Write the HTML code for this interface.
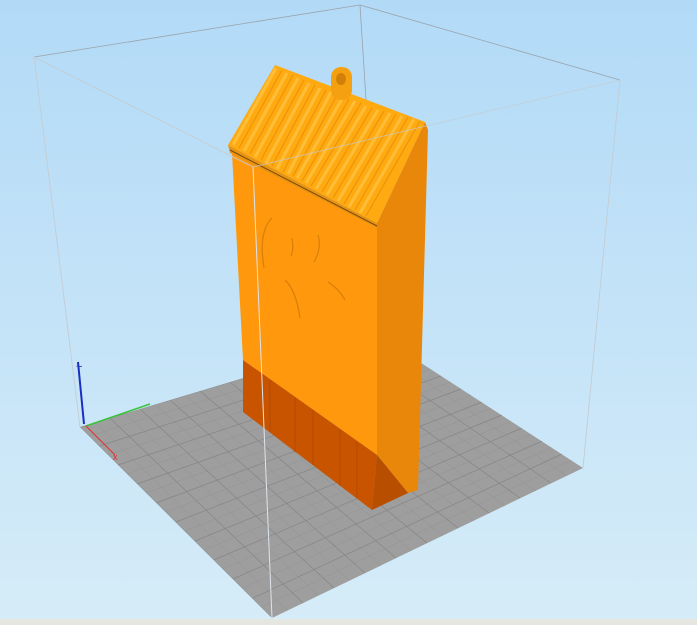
<!DOCTYPE html>
<html><head><style>
html,body{margin:0;padding:0;width:697px;height:625px;overflow:hidden}
</style></head><body>
<svg width="697" height="625" viewBox="0 0 697 625" xmlns="http://www.w3.org/2000/svg">
<defs>
<linearGradient id="bg" x1="0" y1="0" x2="0" y2="1">
<stop offset="0" stop-color="#b2daf7"/><stop offset="1" stop-color="#d6ecf8"/>
</linearGradient>
<clipPath id="fl"><polygon points="80,427 381,337 583,468 272,618"/></clipPath>
</defs>
<rect width="697" height="625" fill="url(#bg)"/>
<rect y="619" width="697" height="6" fill="#e6e6e0"/>
<g stroke="#9aa3aa" stroke-width="0.8" fill="none">
<line x1="34" y1="57" x2="360" y2="5"/>
<line x1="360" y1="5" x2="620" y2="80"/>
<line x1="360" y1="5" x2="381" y2="337"/>
</g>
<polygon points="80,427 381,337 583,468 272,618" fill="#9e9e9e"/>
<g clip-path="url(#fl)" stroke="#939393" stroke-width="0.5">
<line x1="95" y1="422" x2="288" y2="611"/><line x1="125" y1="413" x2="319" y2="596"/>
<line x1="155" y1="404" x2="350" y2="581"/><line x1="185" y1="395" x2="381" y2="566"/>
<line x1="215" y1="386" x2="412" y2="551"/><line x1="245" y1="377" x2="443" y2="536"/>
<line x1="275" y1="368" x2="474" y2="521"/><line x1="305" y1="359" x2="505" y2="506"/>
<line x1="335" y1="350" x2="536" y2="491"/><line x1="365" y1="341" x2="567" y2="476"/>
<line x1="89" y1="436" x2="391" y2="343"/><line x1="108" y1="455" x2="411" y2="356"/>
<line x1="127" y1="474" x2="431" y2="369"/><line x1="146" y1="493" x2="451" y2="382"/>
<line x1="166" y1="512" x2="471" y2="395"/><line x1="185" y1="531" x2="492" y2="408"/>
<line x1="204" y1="550" x2="512" y2="421"/><line x1="223" y1="569" x2="532" y2="434"/>
<line x1="243" y1="588" x2="552" y2="447"/><line x1="262" y1="607" x2="572" y2="460"/>
</g>
<g clip-path="url(#fl)" stroke="#858585" stroke-width="0.7">
<line x1="80" y1="427" x2="272" y2="618"/>
<line x1="110" y1="418" x2="303" y2="603"/>
<line x1="140" y1="409" x2="334" y2="588"/>
<line x1="170" y1="400" x2="365" y2="573"/>
<line x1="200" y1="391" x2="396" y2="558"/>
<line x1="230" y1="382" x2="427" y2="543"/>
<line x1="260" y1="373" x2="458" y2="528"/>
<line x1="290" y1="364" x2="489" y2="513"/>
<line x1="320" y1="355" x2="520" y2="498"/>
<line x1="350" y1="346" x2="551" y2="483"/>
<line x1="80" y1="427" x2="381" y2="337"/>
<line x1="99" y1="446" x2="401" y2="350"/>
<line x1="118" y1="465" x2="421" y2="363"/>
<line x1="137" y1="484" x2="441" y2="376"/>
<line x1="156" y1="503" x2="461" y2="389"/>
<line x1="176" y1="522" x2="482" y2="402"/>
<line x1="195" y1="541" x2="502" y2="415"/>
<line x1="214" y1="560" x2="522" y2="428"/>
<line x1="233" y1="579" x2="542" y2="441"/>
<line x1="253" y1="598" x2="562" y2="454"/>
</g>
<g stroke="#c4ccd2" stroke-width="0.9" fill="none">
<line x1="34" y1="57" x2="80" y2="427"/>
<line x1="620" y1="80" x2="583" y2="468"/>
</g>
<line x1="84" y1="424" x2="78" y2="362" stroke="#1a2fbf" stroke-width="2"/>
<text x="76" y="370" font-family="Liberation Sans,sans-serif" font-size="11" fill="#1a2fbf">~</text>
<line x1="86" y1="426" x2="150" y2="404" stroke="#3ac43a" stroke-width="1.5"/>
<line x1="86" y1="426" x2="115" y2="455" stroke="#e03030" stroke-width="1"/>
<text x="113" y="460" font-family="Liberation Sans,sans-serif" font-size="9" fill="#e03030">x</text>
<polygon points="377,223 425,122 428,130 418,490 408,493 377,455" fill="#e8870a"/>
<polygon points="232,153 377,223 377,455 243,360" fill="#ff980c"/>
<polygon points="243,360 377,455 372,510 243,412" fill="#c85400"/>
<polygon points="377,455 408,493 372,510" fill="#b84e00"/>
<g stroke="#b04800" stroke-width="0.8">
<line x1="270" y1="380" x2="270" y2="432"/><line x1="295" y1="398" x2="295" y2="452"/>
<line x1="313" y1="410" x2="313" y2="465"/><line x1="340" y1="430" x2="340" y2="486"/>
<line x1="357" y1="442" x2="357" y2="498"/>
</g>
<g stroke="#d97e08" stroke-width="1.2" fill="none">
<path d="M272,218 Q258,232 264,268"/>
<path d="M292,238 Q294,250 291,256"/><path d="M318,235 Q322,248 314,262"/>
<path d="M285,280 Q296,290 300,318"/><path d="M328,282 Q340,290 345,300"/>
</g>
<polygon points="228,145 275,65 425,122 377,223" fill="#ffaa10"/>
<polygon points="228,145 377,223 377,228 230,153" fill="#e89410"/>
<line x1="230" y1="150" x2="377" y2="226" stroke="#7a4a10" stroke-width="1"/>
<g stroke="#ffbe3a" stroke-width="3">
<line x1="276" y1="68" x2="233" y2="145"/><line x1="287" y1="73" x2="244" y2="151"/>
<line x1="298" y1="78" x2="255" y2="157"/><line x1="309" y1="83" x2="266" y2="163"/>
<line x1="320" y1="88" x2="277" y2="169"/><line x1="331" y1="92" x2="288" y2="174"/>
<line x1="343" y1="97" x2="297" y2="178"/><line x1="355" y1="101" x2="306" y2="183"/>
<line x1="366" y1="106" x2="316" y2="189"/><line x1="378" y1="110" x2="327" y2="195"/>
<line x1="390" y1="113" x2="338" y2="201"/><line x1="402" y1="116" x2="349" y2="207"/>
<line x1="414" y1="119" x2="360" y2="213"/>
</g>
<g stroke="#e8900a" stroke-width="1">
<line x1="282" y1="70" x2="239" y2="148"/><line x1="293" y1="75" x2="250" y2="154"/>
<line x1="304" y1="80" x2="261" y2="160"/><line x1="315" y1="85" x2="272" y2="166"/>
<line x1="326" y1="90" x2="283" y2="172"/><line x1="337" y1="95" x2="293" y2="176"/>
<line x1="349" y1="99" x2="302" y2="181"/>
<line x1="361" y1="103" x2="311" y2="186"/><line x1="372" y1="108" x2="322" y2="192"/>
<line x1="384" y1="111" x2="333" y2="198"/><line x1="396" y1="114" x2="344" y2="204"/>
<line x1="408" y1="117" x2="355" y2="210"/><line x1="420" y1="121" x2="366" y2="216"/>
</g>
<rect x="331" y="67" width="21" height="33" rx="10" fill="#f5a010"/>
<ellipse cx="341" cy="79" rx="5" ry="6" fill="#d08008"/>
<line x1="253" y1="167" x2="272" y2="618" stroke="#dde4ea" stroke-width="1"/>
<line x1="34" y1="57" x2="253" y2="167" stroke="#c4ccd2" stroke-width="0.9"/>
<line x1="253" y1="167" x2="620" y2="80" stroke="#c4ccd2" stroke-width="0.9" opacity="0.7"/>
</svg>
</body></html>
